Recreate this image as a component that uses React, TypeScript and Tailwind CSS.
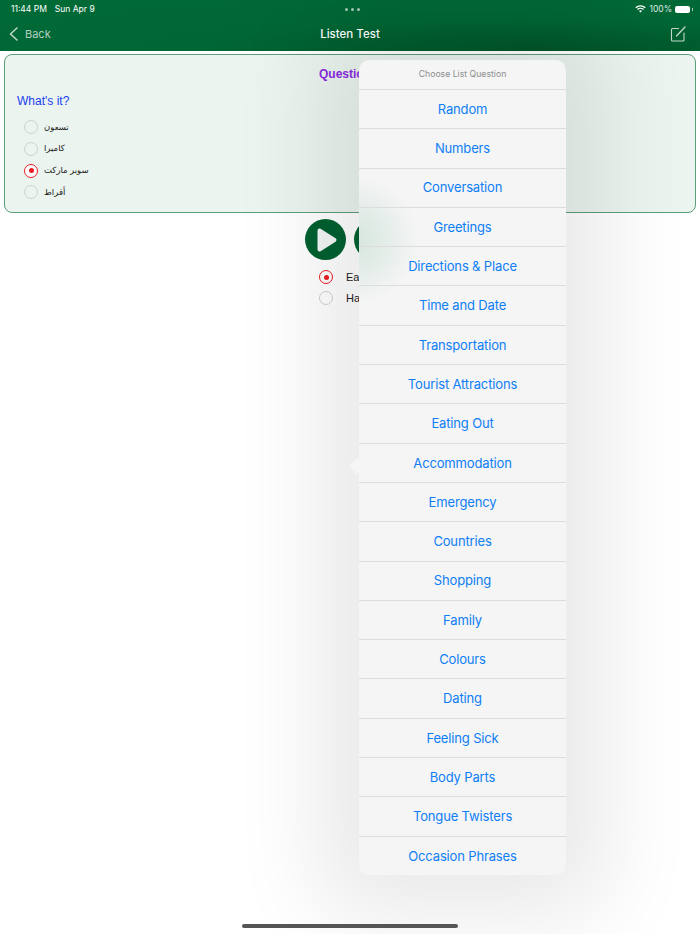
const topics = [
  "Random",
  "Numbers",
  "Conversation",
  "Greetings",
  "Directions & Place",
  "Time and Date",
  "Transportation",
  "Tourist Attractions",
  "Eating Out",
  "Accommodation",
  "Emergency",
  "Countries",
  "Shopping",
  "Family",
  "Colours",
  "Dating",
  "Feeling Sick",
  "Body Parts",
  "Tongue Twisters",
  "Occasion Phrases",
];

const answers = [
  { label: "تسعون", on: false },
  { label: "كاميرا", on: false },
  { label: "سوبر ماركت", on: true },
  { label: "أقراط", on: false },
];

function Radio({ on }: { on: boolean }) {
  if (on) {
    return (
      <span className="flex h-[14px] w-[14px] items-center justify-center rounded-full border-[1.5px] border-[#ee1c25] bg-white">
        <span className="h-[5px] w-[5px] rounded-full bg-[#ee1c25]" />
      </span>
    );
  }
  return <span className="h-[14px] w-[14px] rounded-full border-[1.5px] border-[#cfd2d0]" />;
}

function StatusBar() {
  return (
    <div className="flex h-[17px] items-center justify-between pl-[11px] pr-[7px] pt-[1px] font-['Inter',sans-serif] text-[8.5px] text-white">
      <div className="flex w-[120px] gap-[8px]">
        <span>11:44 PM</span>
        <span>Sun Apr 9</span>
      </div>
      <div className="flex gap-[3px]">
        <span className="h-[3px] w-[3px] rounded-full bg-[#a9c9b7]" />
        <span className="h-[3px] w-[3px] rounded-full bg-[#a9c9b7]" />
        <span className="h-[3px] w-[3px] rounded-full bg-[#a9c9b7]" />
      </div>
      <div className="flex w-[120px] items-center justify-end gap-[2px]">
        <svg width="11" height="8" viewBox="0 0 22 16" fill="none" stroke="white" strokeWidth="2.6">
          <path d="M1.5 5.5a13.5 13.5 0 0 1 19 0" />
          <path d="M5 9a8.6 8.6 0 0 1 12 0" />
          <path d="M11 15l-3-3a4.2 4.2 0 0 1 6 0z" fill="white" stroke="none" />
        </svg>
        <span className="ml-[1px] text-[#dfeae3]">100%</span>
        <span className="ml-[1px] flex h-[7px] w-[15px] rounded-[2px] bg-white" />
        <span className="h-[3px] w-[1px] bg-[#a9c9b7]" />
      </div>
    </div>
  );
}

function Popover() {
  return (
    <div className="absolute left-[359px] top-[60px] w-[207px] rounded-[10px] bg-[#f4f5f4] font-['Inter',sans-serif] shadow-[0_0_90px_40px_rgba(0,0,0,0.09)]">
      <div className="absolute left-[-8px] top-[400px] h-[12px] w-[12px] rotate-45 rounded-[2px] bg-[#f4f5f4]" />
      {/* the play button shows through the frosted panel */}
      <div className="absolute inset-0 overflow-hidden rounded-[10px]">
        <div className="absolute left-[-70px] top-[115px] h-[130px] w-[130px] rounded-full bg-[radial-gradient(circle,rgba(0,120,70,0.13)_0%,rgba(0,120,70,0)_70%)]" />
      </div>
      <div className="relative flex h-[29px] items-center justify-center pt-[1px] text-[8.7px] text-[#8e8e90]">
        Choose List Question
      </div>
      {topics.map((t) => (
        <div
          key={t}
          className="relative flex h-[39.3px] items-center justify-center border-t border-[#dcdddc] pt-[1px] text-[13px] tracking-[-0.15px] text-[#0f7ef6]"
        >
          {t}
        </div>
      ))}
    </div>
  );
}

export default function App() {
  return (
    <div className="relative h-[934px] w-[700px] overflow-hidden bg-white font-['Liberation_Sans','DejaVu_Sans',sans-serif]">
      <div className="h-[51px] bg-[radial-gradient(ellipse_at_78%_100%,#005527_0%,#006635_45%,#006b37_100%)]">
        <StatusBar />
        <div className="relative flex h-[34px] items-center justify-between pl-[9px] pr-[14px] font-['Inter',sans-serif]">
          <div className="flex items-center gap-[7px] text-[11px] text-[#b7cfc1]">
            <svg width="9" height="14" viewBox="0 0 9 14" fill="none" stroke="#c3d8cc" strokeWidth="1.5" strokeLinecap="round" strokeLinejoin="round">
              <path d="M8 1 L1.5 7 L8 13" />
            </svg>
            <span>Back</span>
          </div>
          <span className="absolute left-0 right-0 pt-[1px] text-center text-[11.5px] font-medium text-white">Listen Test</span>
          <svg width="16" height="16" viewBox="0 0 16 16" fill="none" stroke="#c3d8cc" strokeWidth="1.1" strokeLinecap="round">
            <path d="M8.5 2.5 H2.5 A1 1 0 0 0 1.5 3.5 V14 A1 1 0 0 0 2.5 15 H13 A1 1 0 0 0 14 14 V7" />
            <path d="M6.5 10 L15 1" strokeWidth="1.3" />
          </svg>
        </div>
      </div>

      <div className="mx-[4px] mt-[3px] h-[159px] rounded-[8px] border border-[#5c9d7b] bg-[#ebf4ef]">
        <div className="pt-[10px] text-center text-[12px] font-bold text-[#8a2be2]">Question 1</div>
        <div className="ml-[12px] mt-[9px] text-[12px] leading-[18px] text-[#1a3df0]">What's it?</div>
        <div className="ml-[19px] mt-[10px] flex flex-col gap-[7.8px]">
          {answers.map((a) => (
            <div key={a.label} className="flex h-[14px] items-center gap-[6px]">
              <Radio on={a.on} />
              <span className="text-[8.5px] text-[#222]">{a.label}</span>
            </div>
          ))}
        </div>
      </div>

      <div className="mt-[6px] flex justify-center gap-[8px]">
        {[0, 1].map((i) => (
          <div key={i} className="flex h-[41px] w-[41px] items-center justify-center rounded-full bg-[#006130]">
            <svg width="24" height="26" viewBox="0 0 24 26" className="ml-[3px]">
              <path d="M4.5 3.5 L19.5 13 L4.5 22.5 Z" fill="#f4f7f5" stroke="#f4f7f5" strokeWidth="4" strokeLinejoin="round" />
            </svg>
          </div>
        ))}
      </div>
      <div className="ml-[319px] mt-[10px] flex flex-col gap-[7px]">
        <div className="flex h-[14px] items-center gap-[13px] text-[11px] text-[#222]">
          <Radio on />
          <span>Easy</span>
        </div>
        <div className="flex h-[14px] items-center gap-[13px] text-[11px] text-[#222]">
          <Radio on={false} />
          <span>Hard</span>
        </div>
      </div>

      <Popover />

      <div className="absolute bottom-[6px] left-[242px] h-[4px] w-[216px] rounded-full bg-[#555]" />
    </div>
  );
}
